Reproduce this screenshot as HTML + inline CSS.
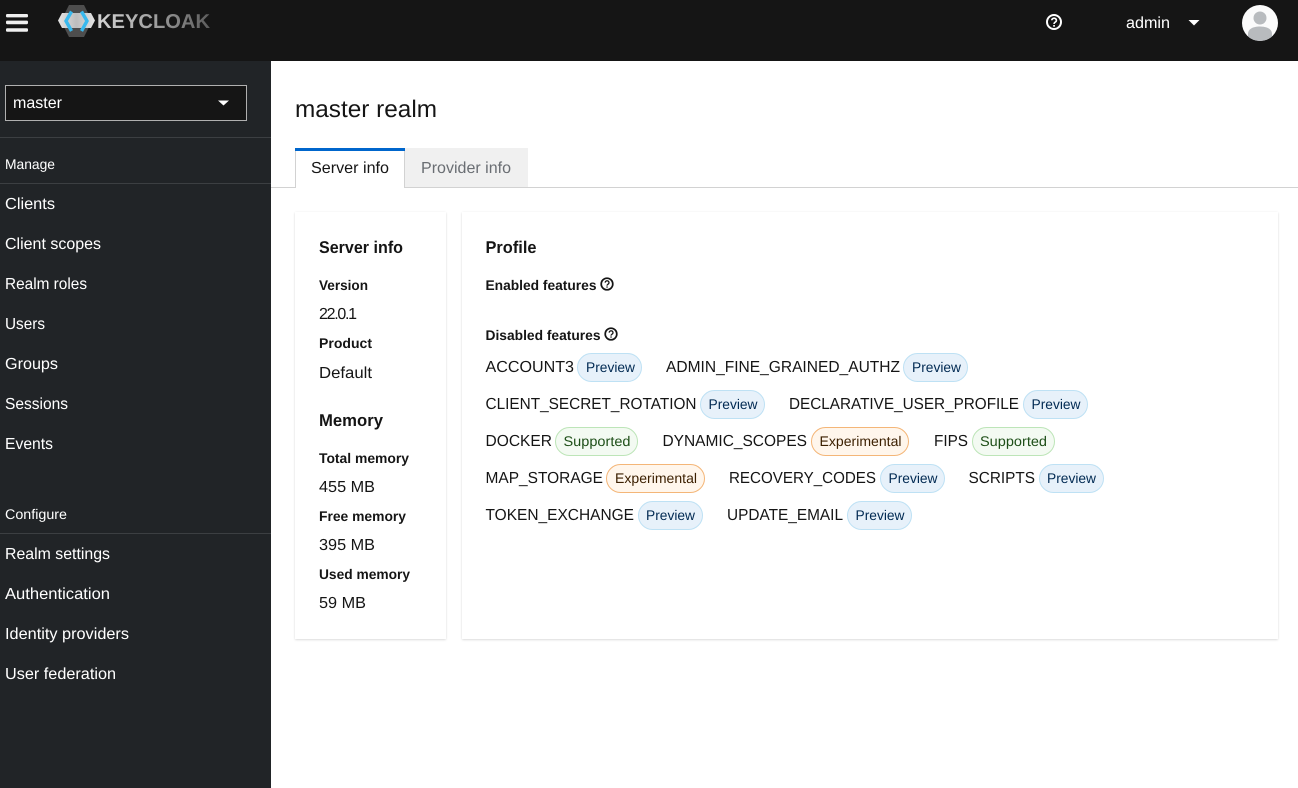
<!DOCTYPE html>
<html lang="en">
<head>
<meta charset="utf-8">
<title>Keycloak - master realm</title>
<style>
html,body{margin:0;padding:0;background:#fff;width:1298px;height:788px;overflow:hidden}
svg{display:block;font-family:"Liberation Sans",sans-serif}
text{text-rendering:geometricPrecision}
.n{fill:#fff;font-size:16px}
.s{fill:#fff;font-size:14px}
.b{fill:#151515;font-size:14px;font-weight:700}
.h{fill:#151515;font-size:17px;font-weight:700}
.v{fill:#151515;font-size:16px}
.f{fill:#151515;font-size:16px}
.c{font-size:14px}
.pb{fill:#e7f1fa;stroke:#bee1f4}
.pt{fill:#002952}
.gb{fill:#f3faf2;stroke:#bde5b8}
.gt{fill:#1e4f18}
.ob{fill:#fff6ec;stroke:#f4b678}
.ot{fill:#3b1f00}
.card{fill:#fff;filter:drop-shadow(0 1px 1px rgba(3,3,3,.12)) drop-shadow(0 0 1px rgba(3,3,3,.05))}
</style>
</head>
<body>
<svg width="1298" height="788" viewBox="0 0 1298 788" xmlns="http://www.w3.org/2000/svg">
<defs>
<linearGradient id="kc" x1="97" y1="0" x2="210" y2="0" gradientUnits="userSpaceOnUse">
<stop offset="0" stop-color="#d4d4d4"/><stop offset=".5" stop-color="#a0a0a0"/><stop offset="1" stop-color="#5c5c5c"/>
</linearGradient>
<linearGradient id="kh" x1="58" y1="0" x2="95" y2="0" gradientUnits="userSpaceOnUse">
<stop offset="0" stop-color="#e4e4e4"/><stop offset=".5" stop-color="#bdbdbd"/><stop offset="1" stop-color="#e4e4e4"/>
</linearGradient>
<clipPath id="av"><circle cx="1260" cy="23" r="18"/></clipPath>
</defs>

<!-- header -->
<rect x="0" y="0" width="1298" height="61" fill="#151515"/>
<rect x="6" y="14" width="22" height="3.4" rx="1.2" fill="#f0f0f0"/>
<rect x="6" y="20.6" width="22" height="3.6" rx="1.2" fill="#f0f0f0"/>
<rect x="6" y="28.2" width="22" height="3.6" rx="1.2" fill="#f0f0f0"/>

<path d="M69 5H84L92 21 84 37H69L61 21Z" fill="#4d4d4d"/>
<path d="M62 13H91L95 20.500 91 28H62L58 20.500Z" fill="url(#kh)"/>
<polyline points="71.500,11.500 66,21 71.500,31" fill="none" stroke="#39b9ee" stroke-width="3.400"/>
<polyline points="81.500,11.500 87,21 81.500,31" fill="none" stroke="#39b9ee" stroke-width="3.400"/>
<text x="97" y="28" font-size="20" font-weight="700" fill="url(#kc)" textLength="113" lengthAdjust="spacingAndGlyphs">KEYCLOAK</text>

<circle cx="1054" cy="22" r="7" fill="none" stroke="#fff" stroke-width="2"/>
<path d="M1051.800 20.300a2.300 2.100 0 1 1 3.500 1.800c-.9.6-1.300 1-1.300 1.900" fill="none" stroke="#fff" stroke-width="1.600"/>
<rect x="1053.200" y="25" width="1.700" height="1.700" fill="#fff"/>
<text class="n" x="1126" y="28" textLength="44" lengthAdjust="spacingAndGlyphs">admin</text>
<path d="M1188.500 20H1199.500L1194 25.500Z" fill="#fff"/>
<circle cx="1260" cy="23" r="18" fill="#fbfbfb"/>
<g clip-path="url(#av)">
<circle cx="1260" cy="18" r="6.500" fill="#b8bbbe"/>
<path d="M1248 44V34c0-5 5-7.500 12-7.500s12 2.500 12 7.500v10Z" fill="#b8bbbe"/>
</g>

<!-- sidebar -->
<rect x="0" y="61" width="271" height="727" fill="#212427"/>
<rect x="5.500" y="85.500" width="241" height="35" fill="#151515" stroke="#b0b0b0"/>
<text class="n" x="13" y="108" textLength="49" lengthAdjust="spacingAndGlyphs">master</text>
<path d="M218 100.500H229L223.500 105.500Z" fill="#fff"/>
<rect x="0" y="137" width="271" height="1" fill="#3c3f42"/>
<text class="s" x="5" y="169" textLength="50" lengthAdjust="spacingAndGlyphs">Manage</text>
<rect x="0" y="183" width="271" height="1" fill="#3c3f42"/>
<text class="n" x="5" y="209" textLength="50" lengthAdjust="spacingAndGlyphs">Clients</text>
<text class="n" x="5" y="249" textLength="96" lengthAdjust="spacingAndGlyphs">Client scopes</text>
<text class="n" x="5" y="289" textLength="82" lengthAdjust="spacingAndGlyphs">Realm roles</text>
<text class="n" x="5" y="329" textLength="40" lengthAdjust="spacingAndGlyphs">Users</text>
<text class="n" x="5" y="369" textLength="53" lengthAdjust="spacingAndGlyphs">Groups</text>
<text class="n" x="5" y="409" textLength="63" lengthAdjust="spacingAndGlyphs">Sessions</text>
<text class="n" x="5" y="449" textLength="48" lengthAdjust="spacingAndGlyphs">Events</text>
<text class="s" x="5" y="519" textLength="62" lengthAdjust="spacingAndGlyphs">Configure</text>
<rect x="0" y="533" width="271" height="1" fill="#3c3f42"/>
<text class="n" x="5" y="559" textLength="105" lengthAdjust="spacingAndGlyphs">Realm settings</text>
<text class="n" x="5" y="599" textLength="105" lengthAdjust="spacingAndGlyphs">Authentication</text>
<text class="n" x="5" y="639" textLength="124" lengthAdjust="spacingAndGlyphs">Identity providers</text>
<text class="n" x="5" y="679" textLength="111" lengthAdjust="spacingAndGlyphs">User federation</text>

<!-- title -->
<text x="295" y="117" font-size="24" fill="#151515" textLength="142" lengthAdjust="spacingAndGlyphs">master realm</text>

<!-- tabs -->
<rect x="271" y="187" width="1027" height="1" fill="#d2d2d2"/>
<rect x="405" y="148" width="123" height="39" fill="#f0f0f0"/>
<rect x="295" y="148" width="110" height="40" fill="#fff"/>
<rect x="295" y="151" width="1" height="37" fill="#d2d2d2"/>
<rect x="404" y="151" width="1" height="37" fill="#d2d2d2"/>
<rect x="295" y="148" width="110" height="3" fill="#06c"/>
<text x="311" y="173" font-size="16" fill="#151515" textLength="78" lengthAdjust="spacingAndGlyphs">Server info</text>
<text x="421" y="173" font-size="16" fill="#6a6e73" textLength="90" lengthAdjust="spacingAndGlyphs">Provider info</text>

<!-- cards -->
<rect class="card" x="295" y="212" width="151" height="427"/>
<rect class="card" x="462" y="212" width="816" height="427"/>

<text class="h" x="319" y="253" textLength="84" lengthAdjust="spacingAndGlyphs">Server info</text>
<text class="b" x="319" y="290" textLength="49" lengthAdjust="spacingAndGlyphs">Version</text>
<text class="v" x="319" y="319" textLength="38" lengthAdjust="spacing">22.0.1</text>
<text class="b" x="319" y="348" textLength="53" lengthAdjust="spacingAndGlyphs">Product</text>
<text class="v" x="319" y="378" textLength="53" lengthAdjust="spacingAndGlyphs">Default</text>
<text class="h" x="319" y="426" textLength="64" lengthAdjust="spacingAndGlyphs">Memory</text>
<text class="b" x="319" y="463" textLength="90" lengthAdjust="spacingAndGlyphs">Total memory</text>
<text class="v" x="319" y="492" textLength="56" lengthAdjust="spacingAndGlyphs">455 MB</text>
<text class="b" x="319" y="521" textLength="87" lengthAdjust="spacingAndGlyphs">Free memory</text>
<text class="v" x="319" y="550" textLength="56" lengthAdjust="spacingAndGlyphs">395 MB</text>
<text class="b" x="319" y="579" textLength="91" lengthAdjust="spacingAndGlyphs">Used memory</text>
<text class="v" x="319" y="608" textLength="47" lengthAdjust="spacingAndGlyphs">59 MB</text>

<text class="h" x="485.500" y="253" textLength="51" lengthAdjust="spacingAndGlyphs">Profile</text>
<text class="b" x="485.500" y="290" textLength="111" lengthAdjust="spacingAndGlyphs">Enabled features</text>
<circle cx="607" cy="284" r="5.800" fill="none" stroke="#151515" stroke-width="1.700"/>
<path d="M605.200 282.600a1.900 1.800 0 1 1 2.900 1.500c-.7.500-1.100.8-1.100 1.500" fill="none" stroke="#151515" stroke-width="1.300"/>
<rect x="606.400" y="286.400" width="1.300" height="1.300" fill="#151515"/>
<text class="b" x="485.500" y="340" textLength="115" lengthAdjust="spacingAndGlyphs">Disabled features</text>
<circle cx="611" cy="334" r="5.800" fill="none" stroke="#151515" stroke-width="1.700"/>
<path d="M609.200 332.600a1.900 1.800 0 1 1 2.900 1.500c-.7.500-1.100.8-1.100 1.500" fill="none" stroke="#151515" stroke-width="1.300"/>
<rect x="610.400" y="336.400" width="1.300" height="1.300" fill="#151515"/>

<!-- feature rows -->
<text class="f" x="485.500" y="372" textLength="88.500" lengthAdjust="spacingAndGlyphs">ACCOUNT3</text>
<rect class="pb" x="577.500" y="353.500" width="64" height="28" rx="14"/>
<text class="c pt" x="586" y="372" textLength="49" lengthAdjust="spacingAndGlyphs">Preview</text>
<text class="f" x="666" y="372" textLength="234" lengthAdjust="spacingAndGlyphs">ADMIN_FINE_GRAINED_AUTHZ</text>
<rect class="pb" x="903.500" y="353.500" width="64" height="28" rx="14"/>
<text class="c pt" x="912" y="372" textLength="49" lengthAdjust="spacingAndGlyphs">Preview</text>

<text class="f" x="485.500" y="409" textLength="211" lengthAdjust="spacingAndGlyphs">CLIENT_SECRET_ROTATION</text>
<rect class="pb" x="700.500" y="390.500" width="64" height="28" rx="14"/>
<text class="c pt" x="708.500" y="409" textLength="49" lengthAdjust="spacingAndGlyphs">Preview</text>
<text class="f" x="789" y="409" textLength="230" lengthAdjust="spacingAndGlyphs">DECLARATIVE_USER_PROFILE</text>
<rect class="pb" x="1023.500" y="390.500" width="64" height="28" rx="14"/>
<text class="c pt" x="1031.500" y="409" textLength="49" lengthAdjust="spacingAndGlyphs">Preview</text>

<text class="f" x="485.500" y="446" textLength="66.500" lengthAdjust="spacingAndGlyphs">DOCKER</text>
<rect class="gb" x="555.500" y="427.500" width="82" height="28" rx="14"/>
<text class="c gt" x="563.500" y="446" textLength="67" lengthAdjust="spacingAndGlyphs">Supported</text>
<text class="f" x="662.500" y="446" textLength="144.500" lengthAdjust="spacingAndGlyphs">DYNAMIC_SCOPES</text>
<rect class="ob" x="811.500" y="427.500" width="97" height="28" rx="14"/>
<text class="c ot" x="819.500" y="446" textLength="82" lengthAdjust="spacingAndGlyphs">Experimental</text>
<text class="f" x="934" y="446" textLength="34" lengthAdjust="spacingAndGlyphs">FIPS</text>
<rect class="gb" x="972.500" y="427.500" width="82" height="28" rx="14"/>
<text class="c gt" x="980" y="446" textLength="67" lengthAdjust="spacingAndGlyphs">Supported</text>

<text class="f" x="485.500" y="483" textLength="117.500" lengthAdjust="spacingAndGlyphs">MAP_STORAGE</text>
<rect class="ob" x="606.500" y="464.500" width="98" height="28" rx="14"/>
<text class="c ot" x="615" y="483" textLength="82" lengthAdjust="spacingAndGlyphs">Experimental</text>
<text class="f" x="729" y="483" textLength="147" lengthAdjust="spacingAndGlyphs">RECOVERY_CODES</text>
<rect class="pb" x="880.500" y="464.500" width="64" height="28" rx="14"/>
<text class="c pt" x="888.500" y="483" textLength="49" lengthAdjust="spacingAndGlyphs">Preview</text>
<text class="f" x="968.500" y="483" textLength="66.500" lengthAdjust="spacingAndGlyphs">SCRIPTS</text>
<rect class="pb" x="1039.500" y="464.500" width="64" height="28" rx="14"/>
<text class="c pt" x="1047" y="483" textLength="49" lengthAdjust="spacingAndGlyphs">Preview</text>

<text class="f" x="485.500" y="520" textLength="148.500" lengthAdjust="spacingAndGlyphs">TOKEN_EXCHANGE</text>
<rect class="pb" x="638.500" y="501.500" width="64" height="28" rx="14"/>
<text class="c pt" x="646" y="520" textLength="49" lengthAdjust="spacingAndGlyphs">Preview</text>
<text class="f" x="727" y="520" textLength="116" lengthAdjust="spacingAndGlyphs">UPDATE_EMAIL</text>
<rect class="pb" x="847.500" y="501.500" width="64" height="28" rx="14"/>
<text class="c pt" x="855.500" y="520" textLength="49" lengthAdjust="spacingAndGlyphs">Preview</text>
</svg>
</body>
</html>
